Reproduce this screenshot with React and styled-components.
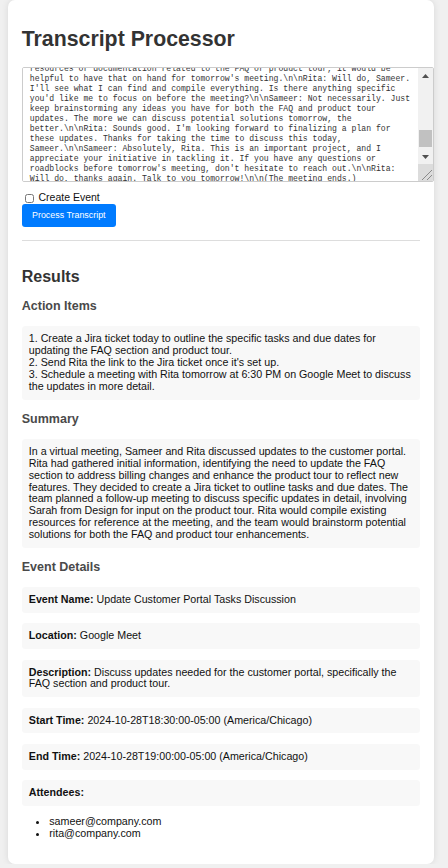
import React, { useLayoutEffect, useRef } from 'react';
import styled, { createGlobalStyle } from 'styled-components';

const GlobalStyle = createGlobalStyle`
  html, body {
    margin: 0;
    padding: 0;
    background: #f0f0f0;
  }
  body {
    padding: 0 8px;
    font-family: "Liberation Sans", Arial, sans-serif;
    color: #222;
  }
`

const Card = styled.div`
  width: 426px;
  box-sizing: border-box;
  padding: 13.75px;
  background: #fff;
  border-radius: 7px;
  box-shadow: 0 0 7px rgba(0, 0, 0, 0.1);
`

const Title = styled.h1`
  font-size: 21.3px;
  font-weight: bold;
  color: #333;
  margin: 13.6px 0 14.8px;
`

const TranscriptFrame = styled.div`
  display: flex;
  box-sizing: border-box;
  width: calc(100% + 14px);
  height: 115px;
  margin-bottom: 10px;
  border: 1px solid #ccc;
  border-radius: 2px;
  overflow: hidden;
  background: #fff;
`

const TranscriptBox = styled.textarea`
  flex: 1;
  min-width: 0;
  margin: 0;
  padding: 7px;
  border: none;
  font-family: "Liberation Mono", "DejaVu Sans Mono", monospace;
  font-size: 8.13px;
  line-height: 10px;
  color: #333;
  background: #fff;
  resize: none;
  overflow: hidden;
  outline: none;
`

const ScrollRail = styled.div`
  width: 15px;
  flex-shrink: 0;
  display: flex;
  flex-direction: column;
  background: #f1f1f1;
`

const RailButton = styled.div`
  height: 15px;
  display: flex;
  align-items: center;
  justify-content: center;
`

const RailTrack = styled.div`
  flex: 1;
  padding-top: ${p => p.$offset}px;
`

const Thumb = styled.div`
  height: 17px;
  margin: 0 1px;
  background: #c1c1c1;
`

const Grip = styled.div`
  height: 17px;
  background: #dcdcdc;
  display: flex;
  align-items: flex-end;
  justify-content: flex-end;
`

const CheckRow = styled.label`
  display: flex;
  align-items: center;
  font-size: 10.5px;
  line-height: 11.8px;
  color: #111;

  input {
    width: 9px;
    height: 9px;
    margin: 0 5px 0 2.75px;
  }
`

const Button = styled.button`
  display: block;
  height: 23px;
  padding: 0 10.3px;
  border: none;
  border-radius: 3px;
  background: #007bff;
  color: #fff;
  font-family: "Liberation Sans", Arial, sans-serif;
  font-size: 8.9px;
  cursor: pointer;
`

const Divider = styled.hr`
  border: none;
  border-top: 1px solid #ddd;
  margin: 13px 0 0;
`

const Heading = styled.h2`
  font-size: 16px;
  font-weight: bold;
  color: #333;
  margin: 27.3px 0 13.1px;
`

const SubHeading = styled.h3`
  font-size: 12.5px;
  font-weight: bold;
  color: #4a4a4a;
  margin: 12.5px 0 13px;
`

const Panel = styled.div`
  background: #f8f8f8;
  border-radius: 3.5px;
  padding: 7px;
  font-size: 10.7px;
  line-height: 11.85px;
  color: #111;
  white-space: pre-line;
  margin-bottom: ${p => (p.$gap ? '10.3px' : '0')};

  strong {
    font-weight: bold;
  }
`

const Attendees = styled.ul`
  margin: 10.3px 0 10.1px;
  padding-left: 27.5px;
  font-size: 10.7px;
  line-height: 11.85px;
  color: #111;
`

const ArrowUp = () => (
  <svg width="7" height="4" viewBox="0 0 7 4"><polygon points="0,4 3.5,0 7,4" fill="#505050" /></svg>
)

const ArrowDown = () => (
  <svg width="7" height="4" viewBox="0 0 7 4"><polygon points="0,0 7,0 3.5,4" fill="#505050" /></svg>
)

const ResizeMark = () => (
  <svg width="15" height="17" viewBox="0 0 15 17">
    <line x1="4" y1="16" x2="14" y2="6" stroke="#8a8a8a" strokeWidth="1" />
    <line x1="9" y1="16" x2="14" y2="11" stroke="#8a8a8a" strokeWidth="1" />
  </svg>
)

const transcript = String.raw`(The meeting starts.)\n\nSameer: Hi Rita, thanks for joining on short notice. I wanted to go over the updates we need to make to the customer portal before the end of the week.\n\nRita: Hi Sameer, no problem at all. I've already gathered some initial information from support and from the billing team.\n\nSameer: Great. What did you find?\n\nRita: The biggest issue is the FAQ section. A lot of the billing answers are out of date since the pricing changes last month, and customers keep opening tickets about invoices and payment methods.\n\nSameer: That makes sense. We should definitely address the billing changes first. What about the product tour?\n\nRita: The product tour still shows the old dashboard. It doesn't cover any of the new features we shipped, like the reporting view and the team settings page.\n\nSameer: Okay. I think the best way to track all of this is a Jira ticket with the specific tasks and due dates, so nothing slips through the cracks.\n\nRita: Agreed. Could you send me the link once it's set up?\n\nSameer: Sure, I'll create it today and send it over. I'd also like to set up a follow-up meeting tomorrow to go through the specific updates in detail. Maybe we can bring in Sarah from Design for input on the product tour.\n\nRita: That sounds good. Sarah had some great ideas last time.\n\nSameer: How about tomorrow at 6:30 PM on Google Meet?\n\nRita: That works for me.\n\nSameer: Perfect. Also, Rita, if you could pull together any of the existing
resources or documentation related to the FAQ or product tour, it would be helpful to have that on hand for tomorrow's meeting.\n\nRita: Will do, Sameer. I'll see what I can find and compile everything. Is there anything specific you'd like me to focus on before the meeting?\n\nSameer: Not necessarily. Just keep brainstorming any ideas you have for both the FAQ and product tour updates. The more we can discuss potential solutions tomorrow, the better.\n\nRita: Sounds good. I'm looking forward to finalizing a plan for these updates. Thanks for taking the time to discuss this today, Sameer.\n\nSameer: Absolutely, Rita. This is an important project, and I appreciate your initiative in tackling it. If you have any questions or roadblocks before tomorrow's meeting, don't hesitate to reach out.\n\nRita: Will do, thanks again. Talk to you tomorrow!\n\n(The meeting ends.)`

const actionItems = `1. Create a Jira ticket today to outline the specific tasks and due dates for updating the FAQ section and product tour.
2. Send Rita the link to the Jira ticket once it's set up.
3. Schedule a meeting with Rita tomorrow at 6:30 PM on Google Meet to discuss the updates in more detail.`

const summary = 'In a virtual meeting, Sameer and Rita discussed updates to the customer portal. Rita had gathered initial information, identifying the need to update the FAQ section to address billing changes and enhance the product tour to reflect new features. They decided to create a Jira ticket to outline tasks and due dates. The team planned a follow-up meeting to discuss specific updates in detail, involving Sarah from Design for input on the product tour. Rita would compile existing resources for reference at the meeting, and the team would brainstorm potential solutions for both the FAQ and product tour enhancements.'

const details = [
  ['Event Name', 'Update Customer Portal Tasks Discussion'],
  ['Location', 'Google Meet'],
  ['Description', 'Discuss updates needed for the customer portal, specifically the FAQ section and product tour.'],
  ['Start Time', '2024-10-28T18:30:00-05:00 (America/Chicago)'],
  ['End Time', '2024-10-28T19:00:00-05:00 (America/Chicago)'],
]

const attendees = ['sameer@company.com', 'rita@company.com']

function App() {
  const boxRef = useRef(null)

  useLayoutEffect(() => {
    const el = boxRef.current
    if (el) el.scrollTop = el.scrollHeight - el.clientHeight - 10
  }, [])

  return (
    <>
      <GlobalStyle />
      <Card>
        <Title>Transcript Processor</Title>
        <TranscriptFrame>
          <TranscriptBox ref={boxRef} defaultValue={transcript} spellCheck={false} />
          <ScrollRail>
            <RailButton><ArrowUp /></RailButton>
            <RailTrack $offset={47}><Thumb /></RailTrack>
            <RailButton><ArrowDown /></RailButton>
            <Grip><ResizeMark /></Grip>
          </ScrollRail>
        </TranscriptFrame>
        <CheckRow>
          <input type="checkbox" />
          Create Event
        </CheckRow>
        <Button>Process Transcript</Button>
        <Divider />

        <Heading>Results</Heading>
        <SubHeading>Action Items</SubHeading>
        <Panel>{actionItems}</Panel>

        <SubHeading>Summary</SubHeading>
        <Panel>{summary}</Panel>

        <SubHeading>Event Details</SubHeading>
        {details.map(([label, value]) => (
          <Panel $gap key={label}>
            <strong>{label}:</strong> {value}
          </Panel>
        ))}
        <Panel $gap>
          <strong>Attendees:</strong>
        </Panel>
        <Attendees>
          {attendees.map(a => <li key={a}>{a}</li>)}
        </Attendees>
      </Card>
    </>
  )
}

export default App;
